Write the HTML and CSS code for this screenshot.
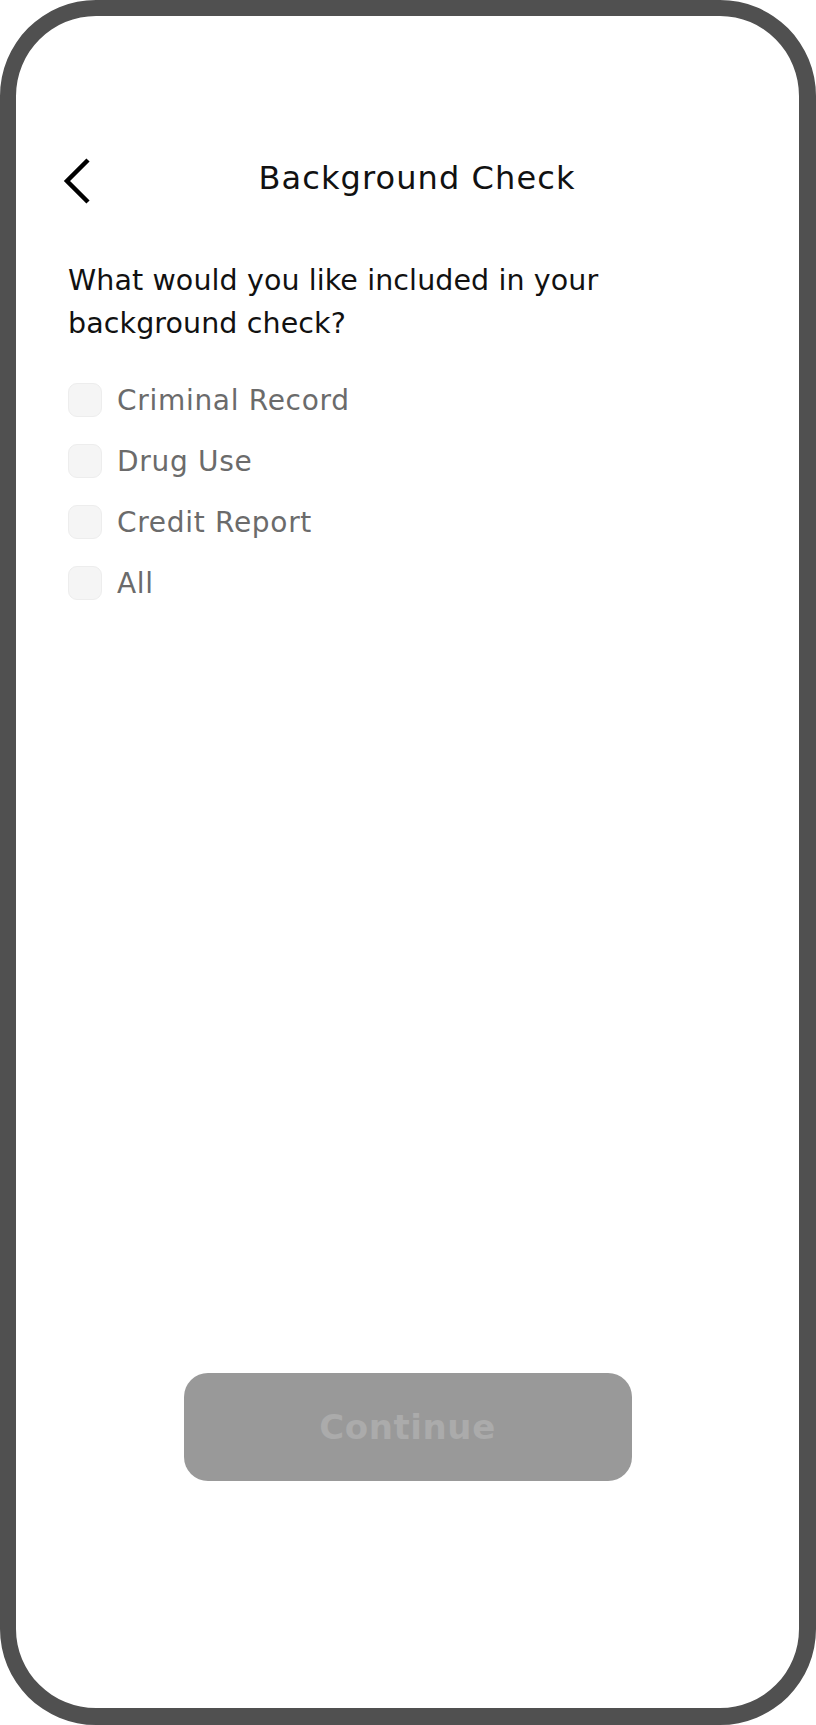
FILE: index.html
```html
<!DOCTYPE html>
<html lang="en">
<head>
    <meta charset="UTF-8">
    <meta name="viewport" content="width=device-width, initial-scale=1.0">
    <title>Background Check</title>
    <link rel="stylesheet" href="styles.css">
</head>
<body>
    <div class="phone">
        <div class="screen">
            <header class="topbar">
                <button class="back" type="button" aria-label="Back">
                    <svg width="28" height="46" viewBox="0 0 28 46">
                        <polyline points="25,2 4,23 25,44" fill="none" stroke="#000" stroke-width="4.5"/>
                    </svg>
                </button>
                <h1 class="title">Background Check</h1>
            </header>

            <p class="question">What would you like included in your<br>background check?</p>

            <ul class="options">
                <li class="option"><span class="box"></span>Criminal Record</li>
                <li class="option"><span class="box"></span>Drug Use</li>
                <li class="option"><span class="box"></span>Credit Report</li>
                <li class="option"><span class="box"></span>All</li>
            </ul>

            <button class="continue" type="button" disabled>Continue</button>
        </div>
    </div>
</body>
</html>
```

FILE: styles.css
```css
/* Page */
body {
    margin: 0;
    background-color: #fff;
    font-family: "DejaVu Sans", sans-serif;
}

/* Phone frame */
.phone {
    height: 1725px;
    box-sizing: border-box;
    border: solid #505050;
    border-width: 16px 17px 17px 16px;
    border-radius: 96px;
    background-color: #fff;
}

.screen {
    height: 100%;
    box-sizing: border-box;
    padding: 142px 47px 227px 47px;
    display: flex;
    flex-direction: column;
}

/* Header */
.topbar {
    display: grid;
    grid-template-columns: auto 1fr;
    align-items: center;
    height: 46px;
}

.back {
    background: none;
    border: none;
    padding: 0;
    display: flex;
}

.title {
    margin: 0 0 6px 0;
    padding-right: 9px;
    text-align: center;
    font-size: 32px;
    font-weight: normal;
    letter-spacing: 1.1px;
    color: #111;
}

/* Question */
.question {
    margin: 55px 0 0 0;
    padding-left: 5px;
    font-size: 28.5px;
    line-height: 43px;
    letter-spacing: 0.1px;
    color: #111;
}

/* Options */
.options {
    list-style: none;
    margin: 38px 0 0 0;
    padding: 0 0 0 5px;
    display: flex;
    flex-direction: column;
    gap: 27px;
}

.option {
    display: flex;
    align-items: center;
    gap: 15px;
    height: 34px;
    font-size: 28px;
    letter-spacing: 0.7px;
    color: #6b6b6b;
}

.box {
    width: 34px;
    height: 34px;
    box-sizing: border-box;
    border: 1px solid #ededed;
    border-radius: 9px;
    background-color: #f5f5f5;
}

/* Button */
.continue {
    margin: auto auto 0 auto;
    width: 448px;
    height: 108px;
    border: none;
    border-radius: 24px;
    background-color: #999;
    color: #ababab;
    font-family: "DejaVu Sans", sans-serif;
    font-size: 34px;
    font-weight: bold;
    letter-spacing: 0.6px;
}
```
